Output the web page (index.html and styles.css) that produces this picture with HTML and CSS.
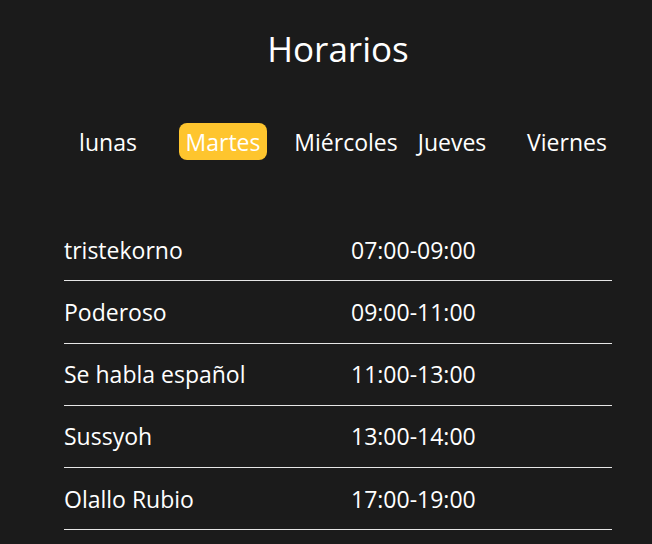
FILE: index.html
```html
<!DOCTYPE html>
<html lang="es">
<head>
<meta charset="utf-8">
<title>Horarios</title>
<link rel="stylesheet" href="styles.css">
</head>
<body>
<main class="page">
  <h1 class="title">Horarios</h1>
  <nav class="tabs">
    <div class="tab-slot slot-1"><span class="tab">lunas</span></div>
    <div class="tab-slot slot-2"><span class="tab tab-active">Martes</span></div>
    <div class="tab-slot slot-3"><span class="tab">Miércoles</span></div>
    <div class="tab-slot slot-4"><span class="tab">Jueves</span></div>
    <div class="tab-slot slot-5"><span class="tab">Viernes</span></div>
  </nav>
  <ul class="schedule">
    <li class="row"><span class="name">tristekorno</span><span class="time">07:00-09:00</span></li>
    <li class="row"><span class="name">Poderoso</span><span class="time">09:00-11:00</span></li>
    <li class="row"><span class="name">Se habla español</span><span class="time">11:00-13:00</span></li>
    <li class="row"><span class="name">Sussyoh</span><span class="time">13:00-14:00</span></li>
    <li class="row"><span class="name">Olallo Rubio</span><span class="time">17:00-19:00</span></li>
  </ul>
</main>
</body>
</html>
```

FILE: styles.css
```css
html, body {
  margin: 0;
  padding: 0;
  background: #1b1b1b;
  color: #ffffff;
  font-family: "Open Sans", "Noto Sans", sans-serif;
}

.page {
  width: 548px;
  margin-left: 64px;
}

.title {
  margin: 25px 0 0;
  font-size: 35px;
  line-height: 48px;
  font-weight: 400;
  text-align: center;
}

.tabs {
  display: flex;
  margin-top: 50px;
  height: 37px;
}

.tab-slot {
  flex: 0 0 auto;
  display: flex;
  justify-content: center;
  white-space: nowrap;
}

.slot-1 { width: 88px; }
.slot-2 { width: 142px; }
.slot-3 { width: 104px; }
.slot-4 { width: 108px; }
.slot-5 { width: 122px; }

.tab {
  display: block;
  padding: 1px 7px 0;
  font-size: 23px;
  line-height: 36px;
  border-radius: 8px;
}

.tab-active {
  background: #fec52e;
}

.schedule {
  list-style: none;
  margin: 59px 0 0;
  padding: 0;
}

.row {
  display: flex;
  align-items: center;
  height: 61.25px;
  border-bottom: 1px solid #e6e6e6;
  font-size: 23px;
}

.name {
  width: 287px;
  flex: 0 0 auto;
}

.time {
  flex: 1 1 auto;
}
```
